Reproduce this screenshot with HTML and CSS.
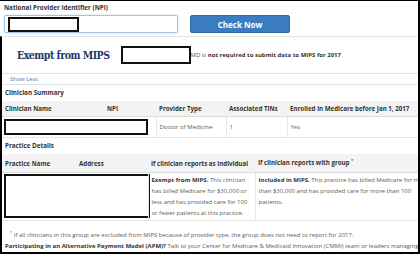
FILE: index.html
```html
<!DOCTYPE html>
<html lang="en">
<head>
  <meta charset="UTF-8">
  <title>MIPS Participation Status</title>
  <link rel="stylesheet" href="styles.css">
</head>
<body>
  <div class="frame">
    <!-- NPI lookup -->
    <div class="search">
      <label class="search-label" for="npi">National Provider Identifier (NPI)</label>
      <div class="search-row">
        <div class="npi-input" id="npi"><span class="redact redact-npi"></span></div>
        <button class="check-btn">Check Now</button>
      </div>
    </div>

    <div class="result">
      <div class="status">
        <h1 class="status-title">Exempt from MIPS</h1>
        <span class="redact redact-name"></span>
        <span class="status-text">MD is <b>not required to submit data to MIPS for 2017</b></span>
      </div>
      <div class="toggle"><a class="show-less">Show Less</a></div>

      <!-- Clinician summary -->
      <h2 class="section-title">Clinician Summary</h2>
      <table class="data summary">
        <colgroup>
          <col style="width:102px"><col style="width:52px"><col style="width:70px"><col style="width:61px"><col style="width:145px">
        </colgroup>
        <thead>
          <tr><th>Clinician Name</th><th>NPI</th><th>Provider Type</th><th>Associated TINs</th><th>Enrolled in Medicare before Jan 1, 2017</th></tr>
        </thead>
        <tbody>
          <tr><td colspan="2" class="redact-cell"><span class="redact redact-row"></span></td><td>Doctor of Medicine</td><td>1</td><td>Yes</td></tr>
        </tbody>
      </table>

      <!-- Practice details -->
      <h2 class="section-title">Practice Details</h2>
      <table class="data practice">
        <colgroup>
          <col style="width:74px"><col style="width:72px"><col style="width:107px"><col style="width:180px">
        </colgroup>
        <thead>
          <tr><th>Practice Name</th><th>Address</th><th>If clinician reports as individual</th><th>If clinician reports with group <sup>*</sup></th></tr>
        </thead>
        <tbody>
          <tr>
            <td colspan="2" class="redact-cell"><span class="redact redact-block"></span></td>
            <td><b>Exempt from MIPS.</b> This clinician has billed Medicare for $30,000 or less and has provided care for 100 or fewer patients at this practice.</td>
            <td><b>Included in MIPS.</b> This practice has billed Medicare for more than $30,000 and has provided care for more than 100 patients.</td>
          </tr>
        </tbody>
      </table>

      <p class="footnote"><sup>*</sup> If all clinicians in this group are excluded from MIPS because of provider type, the group does not need to report for 2017.</p>
      <p class="apm"><b>Participating in an Alternative Payment Model (APM)?</b> Talk to your Center for Medicare &amp; Medicaid Innovation (CMMI) team or leaders managing your APM.</p>
    </div>
  </div>
</body>
</html>
```

FILE: styles.css
```css
body {
  margin: 0;
  font-family: "Open Sans", "Liberation Sans", sans-serif;
  color: #5a5a5a;
  font-size: 6px;
}
.frame {
  width: 420px;
  height: 254px;
  box-sizing: border-box;
  border-top: 1px solid #000;
  border-right: 2px solid #000;
  border-bottom: 2px solid #000;
  overflow: hidden;
  background: #fff;
}
.search {
  padding: 2px 4px 3px;
}
.search-label {
  display: block;
  font-size: 6.3px;
  font-weight: bold;
  color: #333;
  line-height: 10px;
}
.search-row {
  display: flex;
  margin-top: 2px;
}
.npi-input {
  width: 174px;
  height: 18px;
  box-sizing: border-box;
  border: 1px solid #9fc4ea;
  border-radius: 2px;
  box-shadow: 0 0 2px rgba(102, 160, 220, 0.5);
  padding: 1px 3px;
}
.check-btn {
  margin-left: 12px;
  width: 100px;
  height: 18px;
  background-color: #3b7cc0;
  border: 1px solid #2f69a6;
  border-radius: 2px;
  color: #fff;
  font-family: inherit;
  font-weight: bold;
  font-size: 8px;
  padding: 0;
}
.redact {
  display: block;
  box-sizing: border-box;
  border: 2px solid #111;
  background: #fff;
}
.redact-npi {
  width: 71px;
  height: 15px;
}
.result {
  border-left: 2px solid #000;
  border-top: 1px solid #e4e4e4;
}
.status {
  display: flex;
  align-items: center;
  height: 36px;
  padding-left: 15px;
  border-bottom: 1px solid #e4e4e4;
}
.status-title {
  margin: 0;
  font-family: "DejaVu Serif Condensed", "DejaVu Serif", serif;
  font-stretch: condensed;
  font-size: 10.5px;
  letter-spacing: -0.5px;
  color: #1e3a66;
}
.redact-name {
  width: 70px;
  height: 18px;
  margin-left: 11px;
}
.status-text {
  font-size: 6px;
  color: #555;
}
.status-text b {
  color: #333;
}
.toggle {
  height: 10px;
  line-height: 10px;
  padding-left: 8px;
  border-bottom: 1px solid #e4e4e4;
}
.show-less {
  color: #3b7cc0;
  font-size: 5.8px;
}
.section-title {
  margin: 0;
  height: 16px;
  line-height: 16px;
  padding-left: 3px;
  font-size: 6.3px;
  color: #333;
}
.data {
  border-collapse: collapse;
  table-layout: fixed;
  margin-left: 0;
}
.data th {
  background-color: #f3f3f3;
  color: #333;
  font-weight: bold;
  text-align: left;
  padding: 0 3px;
  border-bottom: 1px solid #dcdcdc;
  white-space: nowrap;
  font-size: 6.2px;
}
.data td {
  padding: 0 3px;
  border-right: 1px solid #e6e6e6;
  border-bottom: 1px solid #e6e6e6;
  vertical-align: middle;
}
.summary {
  width: 430px;
}
.summary th {
  height: 15px;
}
.summary td {
  height: 18px;
}
.redact-cell {
  padding: 1px 0 1px 2px !important;
}
.redact-row {
  width: 144px;
  height: 16px;
}
.practice {
  width: 433px;
}
.practice th {
  height: 18px;
}
.practice td {
  vertical-align: top;
  line-height: 11px;
  padding-top: 2px;
  padding-bottom: 1px;
}
.practice td b {
  color: #333;
}
.redact-block {
  width: 146px;
  height: 44px;
}
sup {
  font-size: 4px;
}
.footnote {
  margin: 0;
  height: 18px;
  line-height: 23px;
  padding-left: 8px;
}
.apm {
  margin: 0;
  padding-left: 3px;
  line-height: 14px;
  white-space: nowrap;
}
.apm b {
  color: #333;
}
```
